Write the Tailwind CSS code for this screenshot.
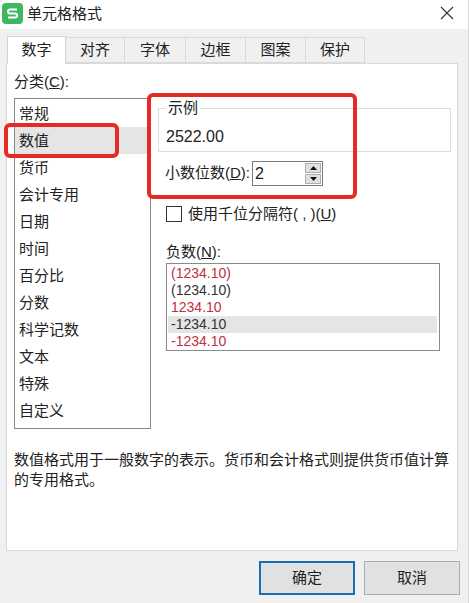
<!DOCTYPE html>
<html lang="zh">
<head>
  <meta charset="UTF-8" />
  <title>单元格格式</title>
  <script src="https://cdn.jsdelivr.net/npm/@tailwindcss/browser@4"></script>
</head>
<body class="bg-[#f0f0f0] font-['Liberation_Sans','Noto_Sans_CJK_SC',sans-serif] text-[15px] text-[#222]">
  <div class="relative w-[469px] h-[603px] overflow-hidden flex flex-col border-r border-[#d8d8d8]">

    <!-- Title bar -->
    <header class="h-[29px] bg-white flex items-center shrink-0">
      <svg class="ml-[2px] mt-[-2px]" width="21" height="21" viewBox="0 0 21 21">
        <rect x="0" y="0" width="21" height="21" rx="4" fill="#3fb65f" />
        <path d="M15 6.5H8a2 2 0 0 0 0 4h5a2 2 0 0 1 0 4H6" fill="none" stroke="#fff" stroke-width="2" />
      </svg>
      <span class="ml-[4px] mt-[-3px] leading-none">单元格格式</span>
      <svg class="ml-auto mr-[14px] mt-[-3px]" width="14" height="14" viewBox="0 0 14 14">
        <path d="M1 1l12 12M13 1L1 13" stroke="#333" stroke-width="1.1" fill="none" />
      </svg>
    </header>

    <!-- Tabs -->
    <nav class="flex ml-[7px] mt-[7px] h-[27px] shrink-0 relative z-10">
      <a class="w-[59px] h-[28px] bg-white border border-b-0 border-[#d4d4d4] flex items-center justify-center">数字</a>
      <a class="w-[59px] mt-[1px] bg-[#f0f0f0] border border-l-0 border-[#d9d9d9] flex items-center justify-center">对齐</a>
      <a class="w-[61px] mt-[1px] bg-[#f0f0f0] border border-l-0 border-[#d9d9d9] flex items-center justify-center">字体</a>
      <a class="w-[60px] mt-[1px] bg-[#f0f0f0] border border-l-0 border-[#d9d9d9] flex items-center justify-center">边框</a>
      <a class="w-[60px] mt-[1px] bg-[#f0f0f0] border border-l-0 border-[#d9d9d9] flex items-center justify-center">图案</a>
      <a class="w-[59px] mt-[1px] bg-[#f0f0f0] border border-l-0 border-[#d9d9d9] flex items-center justify-center">保护</a>
    </nav>

    <!-- Panel -->
    <main class="ml-[6px] w-[452px] h-[488px] bg-white border border-[#d9d9d9] shrink-0 pl-[7px] pr-[6px]">
      <div class="flex">
        <!-- Category list -->
        <section class="w-[137px] shrink-0">
          <p class="h-[20px] mt-[8px] leading-[20px]">分类(<u>C</u>):</p>
          <ul class="mt-[6px] h-[331px] border border-[#8a8a8a] pt-[1px]">
            <li class="h-[27px] leading-[27px] pl-[4px]">常规</li>
            <li class="h-[27px] leading-[27px] pl-[4px] bg-[#e5e5e5]">数值</li>
            <li class="h-[27px] leading-[27px] pl-[4px]">货币</li>
            <li class="h-[27px] leading-[27px] pl-[4px]">会计专用</li>
            <li class="h-[27px] leading-[27px] pl-[4px]">日期</li>
            <li class="h-[27px] leading-[27px] pl-[4px]">时间</li>
            <li class="h-[27px] leading-[27px] pl-[4px]">百分比</li>
            <li class="h-[27px] leading-[27px] pl-[4px]">分数</li>
            <li class="h-[27px] leading-[27px] pl-[4px]">科学记数</li>
            <li class="h-[27px] leading-[27px] pl-[4px]">文本</li>
            <li class="h-[27px] leading-[27px] pl-[4px]">特殊</li>
            <li class="h-[27px] leading-[27px] pl-[4px]">自定义</li>
          </ul>
        </section>

        <!-- Options -->
        <section class="flex-1 min-w-0">
          <!-- Sample -->
          <fieldset class="ml-[7px] w-[293px] h-[52px] border border-[#dcdcdc] mt-[36px] pl-[2px]">
            <legend class="ml-[5px] px-[2px] leading-[16px]">示例</legend>
            <p class="pl-[5px] pt-[11px] text-base leading-[20px]">2522.00</p>
          </fieldset>

          <div class="flex items-center ml-[14px] mt-[9px] h-[25px]">
            <span>小数位数(<u>D</u>):</span>
            <div class="ml-[2px] w-[71px] h-[25px] border border-[#7a7a7a] flex">
              <span class="flex-1 pl-[2px] text-base leading-[23px]">2</span>
              <div class="w-[16px] my-[1px] mr-[1px] flex flex-col gap-[1px]">
                <div class="flex-1 bg-[#e1e1e1] border border-[#adadad] flex items-center justify-center">
                  <svg width="7" height="4" viewBox="0 0 7 4"><path d="M3.5 0L7 4H0z" fill="#111" /></svg>
                </div>
                <div class="flex-1 bg-[#e1e1e1] border border-[#adadad] flex items-center justify-center">
                  <svg width="7" height="4" viewBox="0 0 7 4"><path d="M0 0h7L3.5 4z" fill="#111" /></svg>
                </div>
              </div>
            </div>
          </div>

          <label class="flex items-center ml-[15px] mt-[20px] h-[16px]">
            <span class="w-[16px] h-[16px] border border-[#333] bg-white shrink-0"></span>
            <span class="ml-[6px]">使用千位分隔符( , )(<u>U</u>)</span>
          </label>

          <p class="ml-[15px] mt-[20px] h-[20px] leading-[20px]">负数(<u>N</u>):</p>
          <ul class="ml-[15px] mt-[1px] w-[274px] h-[88px] border border-[#8a8a8a] p-[1px] text-sm leading-[17px] text-[#333]">
            <li class="h-[17px] pl-[3px] text-[#c0303f]">(1234.10)</li>
            <li class="h-[17px] pl-[3px]">(1234.10)</li>
            <li class="h-[17px] pl-[3px] text-[#c0303f]">1234.10</li>
            <li class="h-[17px] pl-[3px] mr-[1px] bg-[#e5e5e5]">-1234.10</li>
            <li class="h-[17px] pl-[3px] text-[#c0303f]">-1234.10</li>
          </ul>
        </section>
      </div>

      <p class="mt-[21px] leading-[20px]">数值格式用于一般数字的表示。货币和会计格式则提供货币值计算的专用格式。</p>
    </main>

    <!-- Buttons -->
    <footer class="flex justify-end gap-[9px] mt-[10px] mr-[8px]">
      <button class="w-[96px] h-[34px] bg-[#e1e1e1] border-2 border-[#1a6fb0]">确定</button>
      <button class="w-[96px] h-[34px] bg-[#e1e1e1] border border-[#adadad]">取消</button>
    </footer>

    <!-- Red annotation boxes -->
    <div class="absolute left-[147px] top-[93px] w-[210px] h-[106px] border-4 border-[#e62a26] rounded-[6px]"></div>
    <div class="absolute left-[4px] top-[123px] w-[115px] h-[35px] border-4 border-[#e62a26] rounded-[6px]"></div>
  </div>
</body>
</html>
